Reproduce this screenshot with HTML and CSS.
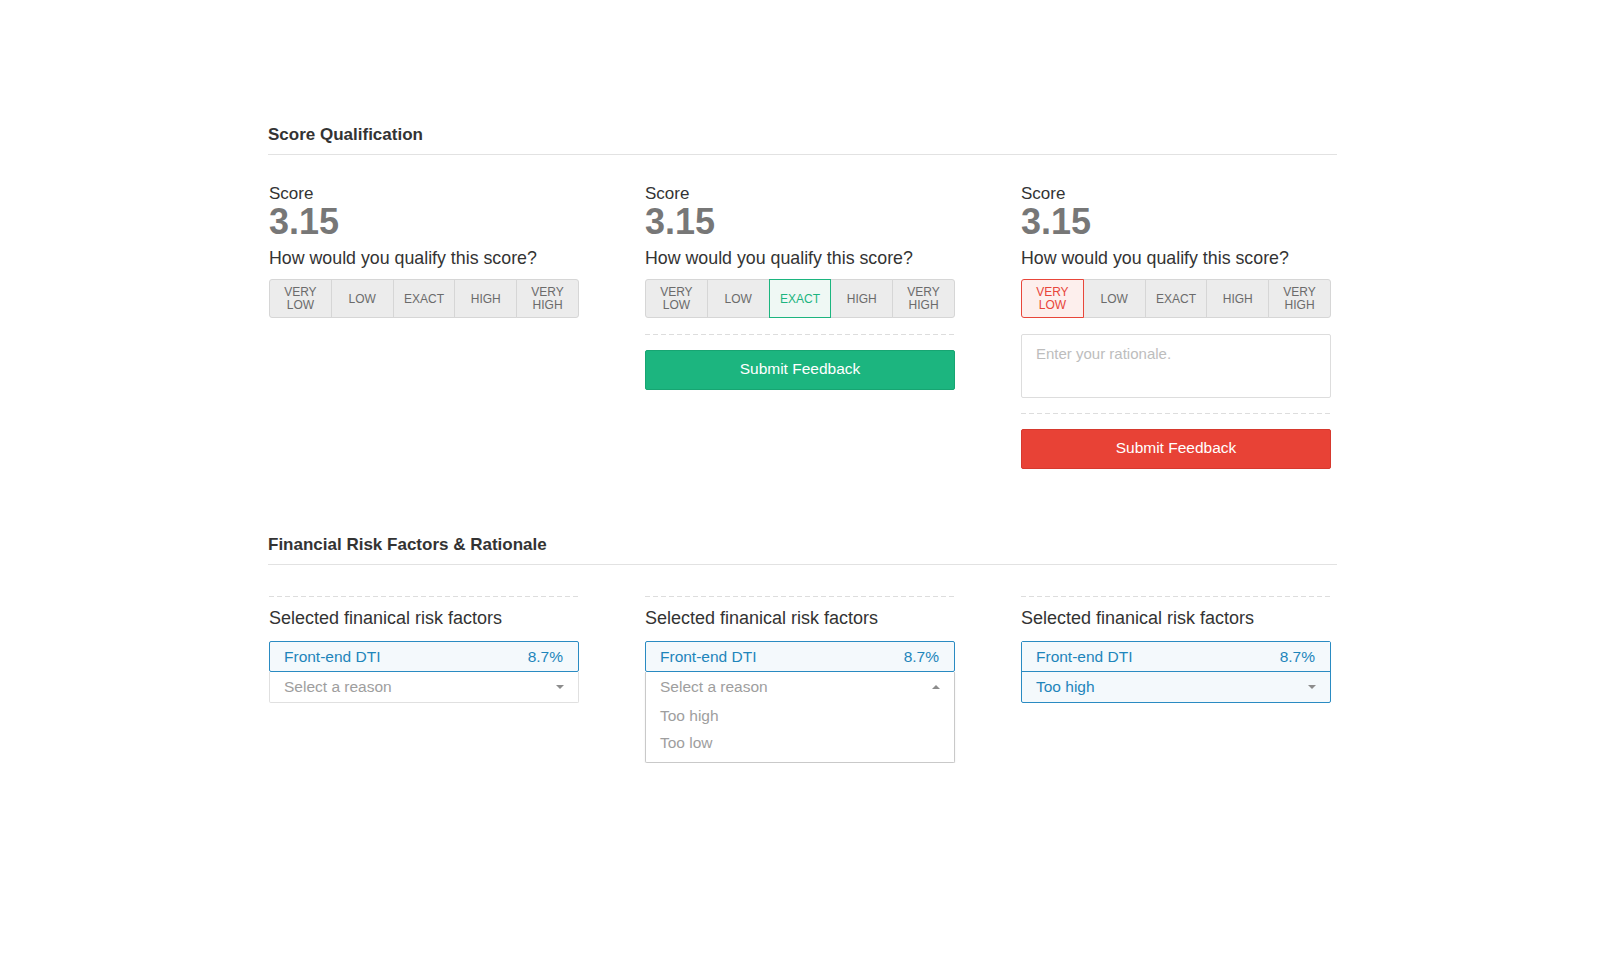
FILE: index.html
```html
<!DOCTYPE html>
<html lang="en">
<head>
<meta charset="utf-8">
<title>Score Qualification</title>
<link rel="stylesheet" href="styles.css">
</head>
<body>
<main class="page">
  <section class="section">
    <h2 class="section-title">Score Qualification</h2>
    <div class="cols">
      <div class="col">
        <div class="score-label">Score</div>
        <div class="score-value">3.15</div>
        <div class="question">How would you qualify this score?</div>
        <div class="seg">
          <button class="seg-btn">Very<br>Low</button>
          <button class="seg-btn">Low</button>
          <button class="seg-btn">Exact</button>
          <button class="seg-btn">High</button>
          <button class="seg-btn">Very<br>High</button>
        </div>
      </div>
      <div class="col">
        <div class="score-label">Score</div>
        <div class="score-value">3.15</div>
        <div class="question">How would you qualify this score?</div>
        <div class="seg">
          <button class="seg-btn">Very<br>Low</button>
          <button class="seg-btn">Low</button>
          <button class="seg-btn is-good">Exact</button>
          <button class="seg-btn">High</button>
          <button class="seg-btn">Very<br>High</button>
        </div>
        <div class="dash dash-after-seg"></div>
        <button class="submit submit-good">Submit Feedback</button>
      </div>
      <div class="col">
        <div class="score-label">Score</div>
        <div class="score-value">3.15</div>
        <div class="question">How would you qualify this score?</div>
        <div class="seg">
          <button class="seg-btn is-bad">Very<br>Low</button>
          <button class="seg-btn">Low</button>
          <button class="seg-btn">Exact</button>
          <button class="seg-btn">High</button>
          <button class="seg-btn">Very<br>High</button>
        </div>
        <textarea class="rationale" placeholder="Enter your rationale."></textarea>
        <div class="dash dash-after-text"></div>
        <button class="submit submit-bad">Submit Feedback</button>
      </div>
    </div>
  </section>

  <section class="section section-2">
    <h2 class="section-title">Financial Risk Factors &amp; Rationale</h2>
    <div class="cols">
      <div class="col">
        <div class="dash"></div>
        <div class="factors-label">Selected finanical risk factors</div>
        <div class="factor">
          <div class="factor-head"><span>Front-end DTI</span><span>8.7%</span></div>
          <div class="factor-select"><span class="ph">Select a reason</span><span class="caret"></span></div>
        </div>
      </div>
      <div class="col">
        <div class="dash"></div>
        <div class="factors-label">Selected finanical risk factors</div>
        <div class="factor">
          <div class="factor-head"><span>Front-end DTI</span><span>8.7%</span></div>
          <div class="factor-menu">
            <div class="factor-select menu-top"><span class="ph">Select a reason</span><span class="caret caret-up"></span></div>
            <div class="menu-opt">Too high</div>
            <div class="menu-opt">Too low</div>
          </div>
        </div>
      </div>
      <div class="col">
        <div class="dash"></div>
        <div class="factors-label">Selected finanical risk factors</div>
        <div class="factor factor-filled">
          <div class="factor-head"><span>Front-end DTI</span><span>8.7%</span></div>
          <div class="factor-select"><span class="val">Too high</span><span class="caret"></span></div>
        </div>
      </div>
    </div>
  </section>
</main>
</body>
</html>
```

FILE: styles.css
```css
* { box-sizing: border-box; }

html, body {
  margin: 0;
  padding: 0;
  background: #ffffff;
}

body {
  font-family: "Liberation Sans", Arial, Helvetica, sans-serif;
  color: #333333;
}

.page {
  width: 1069px;
  margin-left: 268px;
  padding-top: 125px;
}

.section-title {
  margin: 0;
  font-size: 17px;
  line-height: 20px;
  font-weight: bold;
  color: #333333;
  padding-bottom: 9px;
  border-bottom: 1px solid #e2e2e2;
}

.section-2 {
  margin-top: 66px;
}

.cols {
  display: grid;
  grid-template-columns: 310px 310px 310px;
  column-gap: 66px;
  align-items: start;
  padding-left: 1px;
}

.section > .cols {
  margin-top: 29px;
}

.section-2 > .cols {
  margin-top: 31px;
}

.col {
  display: flex;
  flex-direction: column;
}

.score-label {
  font-size: 17px;
  line-height: 20px;
  color: #333333;
}

.score-value {
  font-size: 36px;
  line-height: 36px;
  font-weight: bold;
  color: #777777;
}

.question {
  margin-top: 7px;
  font-size: 17.8px;
  line-height: 22px;
  color: #333333;
}

/* segmented control */
.seg {
  margin-top: 10px;
  display: flex;
  height: 39px;
}

.seg-btn {
  flex: 1 1 0;
  position: relative;
  margin: 0 0 0 -1px;
  padding: 1px 0 0;
  height: 39px;
  border: 1px solid #d6d6d6;
  background: #ececec;
  color: #6b6b6b;
  font-family: inherit;
  font-size: 12px;
  line-height: 13px;
  text-transform: uppercase;
  cursor: pointer;
}

.seg-btn:first-child {
  margin-left: 0;
  border-radius: 3px 0 0 3px;
}

.seg-btn:last-child {
  border-radius: 0 3px 3px 0;
}

.seg-btn.is-good {
  z-index: 1;
  border-color: #1cb57f;
  background: #eff8f4;
  color: #1cb57f;
}

.seg-btn.is-bad {
  z-index: 1;
  border-color: #e8463a;
  background: #fdefed;
  color: #e8463a;
}

/* dashed separators */
.dash {
  height: 1px;
  background-image: repeating-linear-gradient(to right, #dddddd 0 5px, transparent 5px 8px);
}

.dash-after-seg {
  margin-top: 16px;
}

.dash-after-text {
  margin-top: 15px;
}

.submit {
  margin-top: 15px;
  height: 40px;
  padding: 0 0 3px;
  border-radius: 2px;
  font-family: inherit;
  font-size: 15.5px;
  color: #ffffff;
  cursor: pointer;
}

.submit-good {
  background: #1cb57f;
  border: 1px solid #17a572;
}

.submit-bad {
  background: #e84236;
  border: 1px solid #d6392e;
}

.rationale {
  margin-top: 16px;
  height: 64px;
  resize: none;
  border: 1px solid #dddddd;
  border-radius: 2px;
  padding: 9px 14px;
  font-family: inherit;
  font-size: 15px;
  line-height: 19px;
  color: #333333;
}

.rationale::placeholder {
  color: #bdbdbd;
}

/* risk factors */
.factors-label {
  margin-top: 10px;
  font-size: 18px;
  line-height: 22px;
  color: #333333;
}

.factor {
  margin-top: 12px;
}

.factor-head {
  height: 31px;
  display: flex;
  align-items: center;
  justify-content: space-between;
  padding: 0 15px 0 14px;
  border: 1px solid #2a8bc2;
  border-radius: 2px;
  background: #f4f9fc;
  color: #1e85bb;
  font-size: 15.5px;
}

.factor-select {
  height: 31px;
  display: flex;
  align-items: center;
  justify-content: space-between;
  padding: 0 14px;
  border: 1px solid #e0e0e0;
  border-top: 0;
  border-radius: 0 0 2px 2px;
  font-size: 15.5px;
}

.ph {
  color: #9e9e9e;
}

.val {
  color: #1e85bb;
}

.caret {
  width: 0;
  height: 0;
  border-left: 4px solid transparent;
  border-right: 4px solid transparent;
  border-top: 4px solid #8c8c8c;
}

.caret-up {
  border-top: 0;
  border-bottom: 4px solid #8c8c8c;
}

.factor-menu {
  border: 1px solid #c9c9c9;
  border-top: 0;
  border-radius: 0 0 2px 2px;
  box-shadow: 0 1px 2px rgba(0, 0, 0, 0.08);
  padding-bottom: 6px;
}

.factor-menu .menu-top {
  border: 0;
  height: 30px;
}

.menu-opt {
  height: 27px;
  line-height: 27px;
  padding: 0 14px;
  font-size: 15.5px;
  color: #9e9e9e;
}

.factor-filled {
  border: 1px solid #2a8bc2;
  border-radius: 2px;
  background: #f4f9fc;
}

.factor-filled .factor-head {
  height: 30px;
  border: 0;
  border-bottom: 1px solid #2a8bc2;
  border-radius: 0;
}

.factor-filled .factor-select {
  height: 30px;
  border: 0;
}
```
